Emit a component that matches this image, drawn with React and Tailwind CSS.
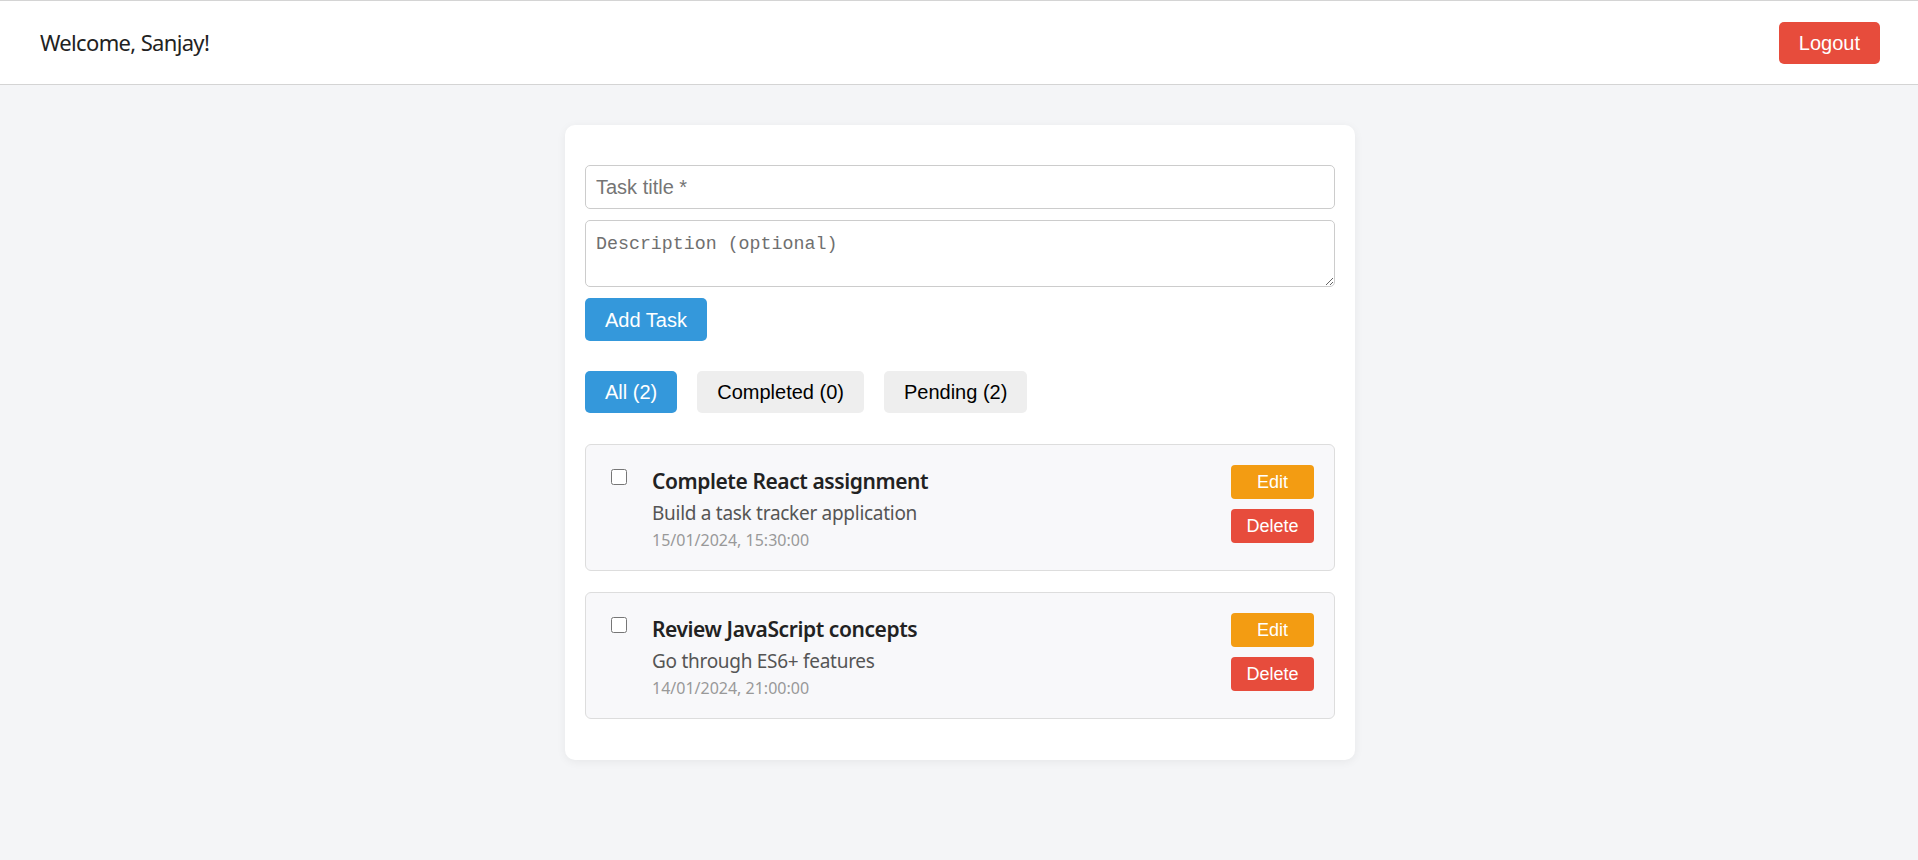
import React from "react";

const tasks = [
  {
    title: "Complete React assignment",
    desc: "Build a task tracker application",
    date: "15/01/2024, 15:30:00",
  },
  {
    title: "Review JavaScript concepts",
    desc: "Go through ES6+ features",
    date: "14/01/2024, 21:00:00",
  },
];

export default function App() {
  return (
    <div className="min-h-[860px] bg-[#f4f5f7] font-['Liberation_Sans',Arial,sans-serif]">
      <header className="h-[85px] bg-white border-y border-y-[#d4d4d4] flex items-center justify-between pl-[40px] pr-[38px]">
        <div className="text-[22px] text-[#222] font-['Noto_Sans',sans-serif] tracking-[-0.03em]">
          Welcome, Sanjay!
        </div>
        <button className="h-[42px] px-[20px] rounded-[5px] bg-[#e74c3c] text-white text-[20px]">
          Logout
        </button>
      </header>

      <main className="flex justify-center pt-[40px] pb-[40px] pl-[2px]">
        <div className="w-[790px] bg-white rounded-[10px] shadow-[0_2px_10px_rgba(0,0,0,0.06)] pt-[40px] px-[20px] pb-[41px]">
          <input
            type="text"
            placeholder="Task title *"
            className="block w-full h-[44px] border border-[#cccccc] rounded-[5px] px-[10px] text-[20px] outline-none placeholder:text-[#757575]"
          />
          <textarea
            placeholder="Description (optional)"
            className="block w-full h-[67px] mt-[11px] border border-[#cccccc] rounded-[5px] p-[10px] text-[18.3px] font-['Liberation_Mono',monospace] outline-none placeholder:text-[#6f6f6f]"
          />
          <button className="mt-[11px] h-[43px] px-[20px] rounded-[5px] bg-[#3498db] text-white text-[20px]">
            Add Task
          </button>

          <div className="mt-[30px] flex gap-[20px]">
            <button className="h-[42px] px-[20px] rounded-[5px] bg-[#3498db] text-white text-[20px]">
              All (2)
            </button>
            <button className="h-[42px] px-[20px] rounded-[5px] bg-[#eeeeee] text-black text-[20px]">
              Completed (0)
            </button>
            <button className="h-[42px] px-[20px] rounded-[5px] bg-[#eeeeee] text-black text-[20px]">
              Pending (2)
            </button>
          </div>

          <div className="mt-[31px] flex flex-col gap-[21px]">
            {tasks.map((t) => (
              <div
                key={t.title}
                className="flex items-start border border-[#dddddd] rounded-[6px] bg-[#f8f8fa] p-[20px]"
              >
                <input
                  type="checkbox"
                  className="w-[16px] h-[16px] ml-[5px] mt-[4px] shrink-0"
                />
                <div className="flex-1 ml-[25px] font-['Noto_Sans',sans-serif]">
                  <div className="mt-[2px] text-[21px] leading-[28px] font-semibold text-[#222] tracking-[-0.02em]">
                    {t.title}
                  </div>
                  <div className="mt-[6px] text-[19px] leading-[24px] text-[#555] tracking-[-0.015em]">
                    {t.desc}
                  </div>
                  <div className="mt-[6px] text-[16px] leading-[19px] text-[#999]">
                    {t.date}
                  </div>
                </div>
                <div className="flex flex-col gap-[10px] w-[83px]">
                  <button className="h-[34px] rounded-[4px] bg-[#f39c12] text-white text-[18px]">
                    Edit
                  </button>
                  <button className="h-[34px] rounded-[4px] bg-[#e74c3c] text-white text-[18px]">
                    Delete
                  </button>
                </div>
              </div>
            ))}
          </div>
        </div>
      </main>
    </div>
  );
}
